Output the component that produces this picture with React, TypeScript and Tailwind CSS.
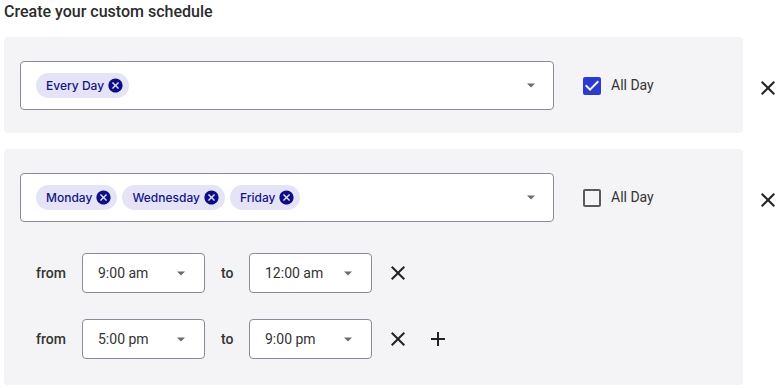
import { MdCancel, MdCheckBox, MdCheckBoxOutlineBlank, MdClose, MdAdd } from "react-icons/md";

function Caret() {
  return (
    <svg width="10" height="5" viewBox="0 0 10 5" className="shrink-0">
      <path d="M1 0.5h8L5 4.5z" fill="#6b6b6b" />
    </svg>
  );
}

function Chip({ label }: { label: string }) {
  return (
    <div className="flex h-[25px] items-center rounded-full bg-[#e5e4f7] pl-[10px] pr-[5px]">
      <span
        className="text-[12px] font-medium text-[#13138a]"
        style={{ fontFamily: "Inter, 'Liberation Sans', sans-serif" }}
      >
        {label}
      </span>
      <MdCancel size={17} className="ml-[3px] text-[#0d0d85]" />
    </div>
  );
}

function DaySelect({ days }: { days: string[] }) {
  return (
    <div className="flex h-[49px] w-[534px] shrink-0 items-center rounded-[4px] border border-[#8c899a] bg-white pl-[15px] pr-[17px]">
      <div className="flex flex-1 gap-[5px]">
        {days.map((d) => (
          <Chip key={d} label={d} />
        ))}
      </div>
      <Caret />
    </div>
  );
}

function AllDay({ checked }: { checked: boolean }) {
  return (
    <div className="ml-[26px] flex items-center">
      {checked ? (
        <MdCheckBox size={24} className="text-[#2c3acf]" />
      ) : (
        <MdCheckBoxOutlineBlank size={24} className="text-[#5a5a5a]" />
      )}
      <span className="ml-[7px] text-[14px] text-[#333]">All Day</span>
    </div>
  );
}

function TimeSelect({ value }: { value: string }) {
  return (
    <div className="flex h-[40px] w-[123px] items-center justify-between rounded-[4px] border border-[#8c899a] bg-white pl-[15px] pr-[18px]">
      <span className="text-[14px] text-[#333]">{value}</span>
      <Caret />
    </div>
  );
}

function TimeRow({ from, to, last }: { from: string; to: string; last?: boolean }) {
  return (
    <div className="flex items-center pl-[16px]">
      <span className="w-[30px] text-[14px] font-medium text-[#333]">from</span>
      <div className="ml-[16px]">
        <TimeSelect value={from} />
      </div>
      <span className="ml-[16px] w-[13px] text-[14px] font-medium text-[#333]">to</span>
      <div className="ml-[15px]">
        <TimeSelect value={to} />
      </div>
      <MdClose size={24} className="ml-[14px] text-[#222]" />
      {last && <MdAdd size={24} className="ml-[16px] text-[#222]" />}
    </div>
  );
}

function Block({
  days,
  checked,
  children,
}: {
  days: string[];
  checked: boolean;
  children?: React.ReactNode;
}) {
  return (
    <div className="flex items-start">
      <div
        className={`w-[739px] shrink-0 rounded-[4px] bg-[#f4f4f6] pl-[16px] pt-[24px] ${
          children ? "pb-[26px]" : "pb-[23px]"
        }`}
      >
        <div className="flex items-center">
          <DaySelect days={days} />
          <AllDay checked={checked} />
        </div>
        {children}
      </div>
      <MdClose size={24} className="ml-[13px] mt-[39px] shrink-0 text-[#222]" />
    </div>
  );
}

export default function App() {
  return (
    <div
      className="px-[4px]"
      style={{ fontFamily: "Roboto, 'Liberation Sans', sans-serif" }}
    >
      <h1 className="h-[24px] text-[16px] font-medium leading-[24px] text-[#2b2b2b]">
        Create your custom schedule
      </h1>
      <div className="mt-[13px] flex flex-col gap-[16px]">
        <Block days={["Every Day"]} checked />
        <Block days={["Monday", "Wednesday", "Friday"]} checked={false}>
          <div className="mt-[31px] flex flex-col gap-[26px]">
            <TimeRow from="9:00 am" to="12:00 am" />
            <TimeRow from="5:00 pm" to="9:00 pm" last />
          </div>
        </Block>
      </div>
    </div>
  );
}
